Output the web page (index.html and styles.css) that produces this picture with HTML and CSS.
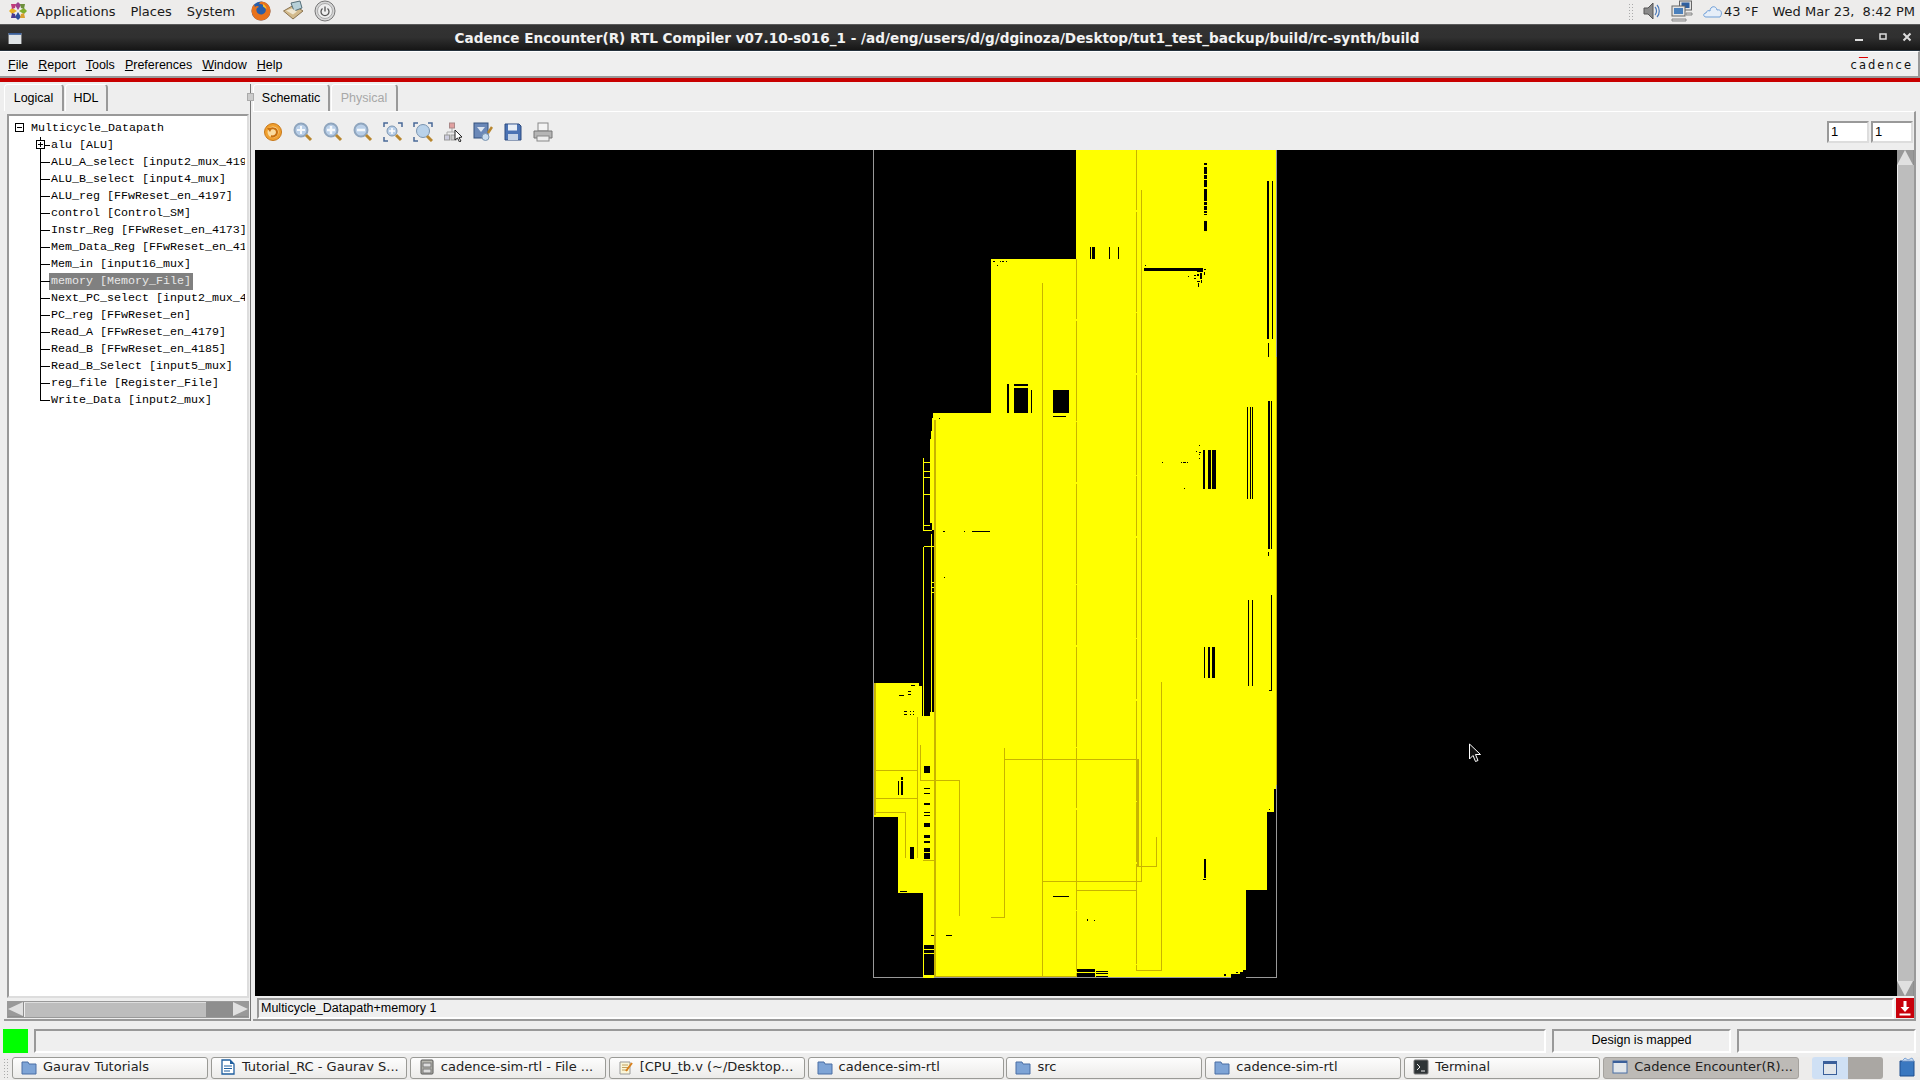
FILE: index.html
```html
<!DOCTYPE html>
<html lang="en">
<head>
<meta charset="utf-8">
<title>Cadence Encounter RTL Compiler</title>
<link rel="stylesheet" href="styles.css">
</head>
<body>
<header class="panel">
  <svg class="ico16 logo" viewBox="0 0 20 20"><path fill="#9c3f8f" d="M10 1l3 3-3 5-3-5z"/><path fill="#e8b020" d="M1 10l3-3 5 3-5 3z"/><path fill="#7fae2c" d="M19 10l-3-3-5 3 5 3z"/><path fill="#2d4f9c" d="M10 19l3-3-3-5-3 5z"/><path fill="#c03a7a" d="M3 3h5l-1 4-3 1z"/><path fill="#6d8f3c" d="M17 3h-5l1 4 3 1z"/><path fill="#4a3a90" d="M3 17h5l-1-4-3-1z"/><path fill="#d9a030" d="M17 17h-5l1-4 3-1z"/></svg>
  <span class="panel-item">Applications</span><span class="panel-item">Places</span><span class="panel-item">System</span>
  <svg class="launcher" viewBox="0 0 22 22"><circle cx="11" cy="11" r="9.500" fill="#2a5ea8"/><path fill="#e8721c" d="M11 1.500c5 0 9.500 4 9.500 9.500S16 20.500 11 20.500 2 16.500 1.500 11c0-3 1-5 2.500-6.500L5 7c1.500-1.500 3-1 4 0-2 .5-3 2-2.500 4 .5 2.500 3 4 5.500 3.500 3-.5 4.500-3.500 3.500-6C14.500 5 12 3.500 9 4c1-1.500 1-2 2-2.500z"/><path fill="#f7c32c" d="M13 4c2 1 3.500 3 3.500 5L13 6.500z"/></svg>
  <svg class="launcher" viewBox="0 0 22 22"><path fill="#d2b98a" stroke="#8a7350" d="M1.500 11L12 5l9 6-10 8z"/><path fill="#b7d0d8" stroke="#56707a" d="M9 3l9-2 2 7-8 3z"/><path fill="#efe6d0" d="M4 10.500l6-2 5 3-4 3z"/></svg>
  <svg class="launcher" viewBox="0 0 22 22"><circle cx="11" cy="11" r="10" fill="#d6d6d6" stroke="#777"/><circle cx="11" cy="11" r="7.500" fill="#eee" stroke="#aaa"/><path fill="none" stroke="#555" stroke-width="1.300" d="M8.500 8.500a4 4 0 1 0 5 0M11 6.500v5"/></svg>
  <div class="panel-right">
    <span class="handle"></span>
    <svg class="tray-speaker" viewBox="0 0 20 20"><path fill="#8a8a8a" stroke="#555" d="M2 7h4l5-5v16l-5-5H2z"/><path fill="none" stroke="#4a78b8" stroke-width="1.200" d="M13 6c2 2 2 6 0 8M15 4c3 3 3 9 0 12"/></svg>
    <svg class="tray-net" viewBox="0 0 22 22"><rect x="8.500" y="1" width="12" height="9" fill="#e4e4e4" stroke="#666"/><rect x="10.500" y="2.500" width="8" height="5.500" fill="#2f5f9f"/><rect x="1" y="6" width="13" height="10" fill="#e4e4e4" stroke="#666"/><rect x="3" y="8" width="9" height="6" fill="#4a80bc"/><path fill="#ddd" stroke="#888" d="M1 19h14v2H1zM15 13h6v2h-6z"/></svg>
    <svg class="tray-cloud" viewBox="0 0 20 14"><path fill="#e6eef8" stroke="#6f9fd8" d="M3 13C0 13 0 9 3 9c0-2 3-3 4-2 0-5 6-6 7-1 4-1 6 3 3 7z"/></svg>
    <span class="weather">43 °F</span>
    <span class="clock">Wed Mar 23,&nbsp; 8:42 PM</span>
  </div>
</header>

<div class="titlebar">
  <svg class="win-ico" viewBox="0 0 14 12"><rect width="14" height="12" fill="#dfe3e6"/><rect width="14" height="2" fill="#3a5f9a"/></svg>
  <span class="title-text">Cadence Encounter(R) RTL Compiler v07.10-s016_1 - /ad/eng/users/d/g/dginoza/Desktop/tut1_test_backup/build/rc-synth/build</span>
  <div class="win-btns">
    <svg viewBox="0 0 10 10"><path d="M1 8h8" stroke="#ddd" stroke-width="2"/></svg>
    <svg viewBox="0 0 10 10"><rect x="2" y="2" width="6" height="5" fill="none" stroke="#ddd" stroke-width="1.500"/></svg>
    <svg viewBox="0 0 10 10"><path d="M1.500 1.500l7 7M8.500 1.500l-7 7" stroke="#ddd" stroke-width="2"/></svg>
  </div>
</div>

<nav class="menubar">
  <span><u>F</u>ile</span><span><u>R</u>eport</span><span><u>T</u>ools</span><span><u>P</u>references</span><span><u>W</u>indow</span><span><u>H</u>elp</span>
  <span class="brand">c<span class="brand-a">a</span>dence</span>
</nav>
<div class="redline"></div>

<main class="main">
  <section class="left">
    <div class="tabs">
      <span class="tab tab-logical">Logical</span><span class="tab tab-hdl">HDL</span>
    </div>
    <div class="treebox">
      <div class="tree">
        <div class="root"><span class="box"><i class="minus"></i></span>Multicycle_Datapath</div>
        <ul class="branch">
          <li><span class="box box-alu"><i class="minus"></i><i class="plus"></i></span><span class="lbl">alu [ALU]</span></li>
          <li><span class="lbl">ALU_A_select [input2_mux_419</span></li>
          <li><span class="lbl">ALU_B_select [input4_mux]</span></li>
          <li><span class="lbl">ALU_reg [FFwReset_en_4197]</span></li>
          <li><span class="lbl">control [Control_SM]</span></li>
          <li><span class="lbl">Instr_Reg [FFwReset_en_4173]</span></li>
          <li><span class="lbl">Mem_Data_Reg [FFwReset_en_41</span></li>
          <li><span class="lbl">Mem_in [input16_mux]</span></li>
          <li><span class="lbl sel">memory [Memory_File]</span></li>
          <li><span class="lbl">Next_PC_select [input2_mux_4</span></li>
          <li><span class="lbl">PC_reg [FFwReset_en]</span></li>
          <li><span class="lbl">Read_A [FFwReset_en_4179]</span></li>
          <li><span class="lbl">Read_B [FFwReset_en_4185]</span></li>
          <li><span class="lbl">Read_B_Select [input5_mux]</span></li>
          <li><span class="lbl">reg_file [Register_File]</span></li>
          <li><span class="lbl">Write_Data [input2_mux]</span></li>
        </ul>
      </div>
    </div>
    <div class="hscroll">
      <span class="arrow-l"></span><span class="thumb"></span><span class="trough"></span><span class="arrow-r"></span>
    </div>
  </section>

  <div class="splitter"><span class="grip"></span></div>

  <section class="right">
    <div class="tabs">
      <span class="tab tab-schem">Schematic</span><span class="tab tab-phys">Physical</span>
    </div>
    <div class="workpane">
      <div class="toolbar">
        <svg class="tool" viewBox="0 0 20 20"><circle cx="10" cy="10" r="8.500" fill="#f0a030" stroke="#c87818"/><circle cx="10" cy="10" r="5.500" fill="#fbdca0"/><path fill="none" stroke="#c87010" stroke-width="2" d="M6 8c2-3 8-2 8 2s-4 5-6 4"/><path fill="#c87010" d="M4 6l5 0-2 4z"/></svg>
        <svg class="tool" viewBox="0 0 20 20"><circle cx="8" cy="8" r="6.500" fill="#b9cfe8" stroke="#8fa5bd" stroke-width="2"/><path stroke="#b8862e" stroke-width="3" d="M13 13l5 5"/><path stroke="#f4f8fc" stroke-width="2" d="M4 8h8M8 4v8"/></svg>
        <svg class="tool" viewBox="0 0 20 20"><circle cx="8" cy="8" r="6.500" fill="#b9cfe8" stroke="#8fa5bd" stroke-width="2"/><path stroke="#b8862e" stroke-width="3" d="M13 13l5 5"/><path stroke="#f4f8fc" stroke-width="2.500" d="M4 8h8M8 4v8"/></svg>
        <svg class="tool" viewBox="0 0 20 20"><circle cx="8" cy="8" r="6.500" fill="#b9cfe8" stroke="#8fa5bd" stroke-width="2"/><path stroke="#b8862e" stroke-width="3" d="M13 13l5 5"/><path stroke="#f4f8fc" stroke-width="2.500" d="M4 8h8"/></svg>
        <svg class="tool" viewBox="0 0 20 20"><path fill="none" stroke="#4a6a98" stroke-width="1.500" d="M1 5V1h4M15 1h4v4M1 15v4h4"/><circle cx="9" cy="9" r="5" fill="#b9cfe8" stroke="#7a94b0"/><path stroke="#b8862e" stroke-width="3" d="M13 13l5 5"/><path stroke="#fff" stroke-width="1.500" d="M6 9h6M9 6v6"/></svg>
        <svg class="tool" viewBox="0 0 20 20"><path fill="none" stroke="#4a6a98" stroke-width="1.500" d="M1 5V1h4M15 1h4v4M1 15v4h4"/><circle cx="10" cy="9" r="6.500" fill="#b9d2ea" stroke="#7a94b0"/><path stroke="#b8862e" stroke-width="3" d="M14 14l5 5"/></svg>
        <svg class="tool" viewBox="0 0 20 20"><path stroke="#aaa" fill="none" d="M9 6v4M4 13v-3h10v3"/><rect x="6.500" y="1" width="5" height="5" fill="#e0a0a0" stroke="#a88"/><rect x="1.500" y="13" width="5" height="5" fill="#ccd" stroke="#999"/><rect x="8" y="13" width="5" height="5" fill="#ccc" stroke="#999"/><path fill="#fff" stroke="#222" d="M12 8l0 10 2.500-2 2 4 1.500-1-2-3.500 3-.5z"/></svg>
        <svg class="tool" viewBox="0 0 20 20"><rect x="1" y="1" width="14" height="15" fill="#6a88b8" stroke="#33507e"/><path fill="#dde6f2" d="M4 5h8l-4 5z"/><circle cx="12.500" cy="15" r="3.500" fill="#c8dcf0" stroke="#7a94b0"/><path stroke="#b8862e" stroke-width="2.500" d="M15 11l4-6"/></svg>
        <svg class="tool" viewBox="0 0 20 20"><path fill="#4a72b4" stroke="#2e4c80" d="M2 2h14l2 2v14H2z"/><rect x="5" y="2.500" width="9" height="6" fill="#e8eef6"/><rect x="5" y="12" width="10" height="6" fill="#c4d2e6"/></svg>
        <svg class="tool" viewBox="0 0 20 20"><rect x="5" y="1" width="10" height="8" fill="#f4f4f4" stroke="#888"/><path fill="#b5b5b5" stroke="#777" d="M1 9h18v7H1z"/><rect x="4" y="14" width="12" height="5" fill="#eee" stroke="#888"/></svg>
        <div class="pager"><span class="pageno">1</span><span class="pageno">1</span></div>
      </div>
      <div class="canvas-row">
        <svg class="canvas" viewBox="255 150 1642 846" shape-rendering="crispEdges">
          <rect x="255" y="150" width="1642" height="846" fill="#000"/>
          <path fill="#ff0" d="M1076 150H1276V357H1277V789H1274V812H1267V890H1246V970H1243V972H1240V975H1231V978H923V893H898V817H874V683H919V686H922V716H930V712H934V530H932V523H930V439H931V431H932V418H933V413H991V259H1076Z"/>
          <path fill="none" stroke="#ff0" d="M923.500 457.500V530.500H932M923.500 462.500H930M923.500 471.500H930M923.500 477.500H930M923.500 494.500H930M923.500 525.500H930M923.500 546.500H934M923.500 546.500V716M931.500 534V716M931.500 582.500H934M931.500 587.500H934M931.500 592.500H934"/>
          <path fill="none" stroke="#c8b400" d="M1042.500 283V978M1141.500 190V881.500H1042M1161.500 682V970.500H1136M1004.500 748V917.500H991M1004.500 759.500H1137M1156.500 837V866.500H1137M1076.500 890.500H1136M920.500 745V780.500H959.500V916M876 770.500H917M876 798.500H917M875 812.500H905.500V858M917.500 717V858M923 860.500H934M1276.500 357V785"/>
          <path fill="none" stroke="#c8b400" stroke-dasharray="60 2 100 1" d="M1076.500 259V978M1136.500 150V970"/>
          <path fill="none" stroke="#c8b400" stroke-width="2" d="M935 420V977H1076M1138 759V866M875 683V815"/>
          <path fill="none" stroke="#999" d="M873.500 150V977.500H1276.500M1276.500 150V357M1276.500 785V977"/>
          <path fill="#000" d="M1204 163h3v2h-3zM1204 167h3v7h-3zM1204 175h3v4h-3zM1204 180h3v7h-3zM1204 189h3v12h-3zM1204 202h3v3h-3zM1204 206h3v4h-3zM1204 211h3v2h-3zM1204 214h3v1h-3zM1204 221h3v10h-3zM1090 247h1v12h-1zM1092 247h3v12h-3zM1109 247h1v12h-1zM1118 247h1v12h-1zM1144 268h59v3h-59zM1197 271h6v1h-6zM1267 181h2v158h-2zM1272 181h1v158h-1zM1268 343h1v14h-1zM1007 384h2v29h-2zM1014 384h14v2h-14zM1014 388h14v25h-14zM1031 390h1v23h-1zM1053 390h16v23h-16zM1053 416h13v1h-13zM1247 407h1v92h-1zM1250 407h1v92h-1zM1252 407h1v92h-1zM1268 401h2v148h-2zM1271 401h1v148h-1zM1268 552h1v4h-1zM1203 450h2v39h-2zM1208 450h3v39h-3zM1212 450h4v39h-4zM1204 647h1v31h-1zM1208 647h2v31h-2zM1212 647h3v31h-3zM1248 600h1v86h-1zM1252 600h1v86h-1zM1271 595h1v96h-1zM1269 690h2v1h-2zM972 531h18v1h-18zM943 531h2v1h-2zM964 531h1v1h-1zM924 766h6v7h-6zM924 788h6v1h-6zM924 793h6v1h-6zM924 803h6v2h-6zM924 812h6v1h-6zM924 815h6v1h-6zM924 823h6v4h-6zM924 835h6v3h-6zM924 841h6v2h-6zM924 848h6v4h-6zM924 853h6v6h-6zM924 945h10v4h-10zM924 950h10v3h-10zM924 954h10v21h-10zM910 847h4v12h-4zM898 781h1v14h-1zM901 781h2v14h-2zM901 777h2v3h-2zM1077 969h18v3h-18zM1077 973h18v4h-18zM1096 971h12v1h-12zM1096 973h12v1h-12zM1096 976h12v1h-12zM1053 896h16v1h-16zM900 891h7v1h-7zM931 935h3v1h-3zM946 935h6v1h-6zM1087 919h1v2h-1zM1094 920h1v1h-1zM1204 859h2v19h-2zM1203 879h3v1h-3zM1231 974h15v4h-15zM1224 974h2v2h-2zM1236 972h2v1h-2zM1269 809h1v1h-1zM993 261h2v1h-2zM1000 261h1v1h-1zM1002 261h2v1h-2zM1006 261h1v1h-1zM997 265h1v1h-1zM1197 274h2v2h-2zM1200 273h2v6h-2zM1194 275h2v1h-2zM1194 278h2v1h-2zM1197 281h3v1h-3zM1201 280h1v3h-1zM1198 283h1v4h-1zM1204 269h2v1h-2zM1204 272h1v3h-1zM1188 276h1v1h-1zM1145 265h1v1h-1zM1199 445h1v1h-1zM1196 451h1v1h-1zM1199 452h2v1h-2zM1199 454h1v1h-1zM1199 458h1v1h-1zM1162 462h1v1h-1zM1181 462h1v1h-1zM1183 462h3v1h-3zM1187 462h1v1h-1zM1184 488h1v1h-1zM944 577h1v1h-1zM939 418h1v1h-1zM899 695h5v1h-5zM908 691h3v1h-3zM908 694h3v1h-3zM904 711h3v1h-3zM904 714h3v1h-3zM910 711h1v1h-1zM913 711h1v1h-1zM910 714h1v1h-1zM913 714h1v1h-1z"/>
          <path fill="#ff0" d="M923 977h11v1h-11z"/>
          <path fill="#000" stroke="none" d="M919 683h4v3h-4zM911 685h4v1h-4z"/>
        </svg>
        <div class="vscroll">
          <span class="tri-up"></span>
          <span class="vtrack"></span>
          <span class="tri-down"></span>
        </div>
      </div>
      <div class="pathbar">
        <div class="pathfield">Multicycle_Datapath+memory 1</div>
        <svg class="redbtn" viewBox="0 0 18 20"><rect width="18" height="20" fill="#c8000a"/><path fill="#fff" d="M7.500 3h3v6h3l-4.500 5-4.500-5h3zM3.500 15.500h11v2h-11z"/></svg>
      </div>
    </div>
  </section>
</main>

<div class="statusbar">
  <span class="led"></span>
  <span class="sfield sfield-main"></span>
  <span class="sfield sfield-msg">Design is mapped</span>
  <span class="sfield sfield-end"></span>
</div>

<footer class="taskbar">
  <span class="dots"></span>
  <div class="task"><svg class="tico" viewBox="0 0 16 16"><path fill="#7ea4d6" stroke="#4a6fa5" d="M1 3h6l1 2h7v10H1z"/></svg>Gaurav Tutorials</div>
  <div class="task"><svg class="tico" viewBox="0 0 16 16"><path fill="#fff" stroke="#1f5f9f" stroke-width="1.300" d="M2 1h8l4 4v10H2z"/><path stroke="#1f5f9f" d="M4 7h8M4 9.500h8M4 12h6"/><path fill="#1f5f9f" d="M10 1l4 4h-4z"/></svg>Tutorial_RC - Gaurav S...</div>
  <div class="task"><svg class="tico" viewBox="0 0 16 16"><rect x="2" y="1" width="12" height="14" rx="1" fill="#b8b8b0" stroke="#555"/><rect x="4" y="4" width="8" height="4" fill="#ddd" stroke="#777"/><rect x="4" y="10" width="8" height="4" fill="#ddd" stroke="#777"/></svg>cadence-sim-rtl - File ...</div>
  <div class="task"><svg class="tico" viewBox="0 0 16 16"><path fill="#fbf6d8" stroke="#999" d="M2 3h10v12H2z"/><path stroke="#c0a060" d="M4 6h6M4 8.500h6M4 11h6"/><path stroke="#d8801c" stroke-width="2" d="M8 12l6-8"/></svg>[CPU_tb.v (~/Desktop...</div>
  <div class="task"><svg class="tico" viewBox="0 0 16 16"><path fill="#7ea4d6" stroke="#4a6fa5" d="M1 3h6l1 2h7v10H1z"/></svg>cadence-sim-rtl</div>
  <div class="task"><svg class="tico" viewBox="0 0 16 16"><path fill="#7ea4d6" stroke="#4a6fa5" d="M1 3h6l1 2h7v10H1z"/></svg>src</div>
  <div class="task"><svg class="tico" viewBox="0 0 16 16"><path fill="#7ea4d6" stroke="#4a6fa5" d="M1 3h6l1 2h7v10H1z"/></svg>cadence-sim-rtl</div>
  <div class="task"><svg class="tico" viewBox="0 0 16 16"><rect x="1" y="1" width="14" height="14" rx="1" fill="#2e3436" stroke="#777"/><path stroke="#eee" fill="none" d="M4 5l3 3-3 3M8 12h4"/></svg>Terminal</div>
  <div class="task task-active"><svg class="tico" viewBox="0 0 16 16"><rect x="1" y="2" width="14" height="12" fill="#e2e6ea" stroke="#4a6fa5"/><rect x="1" y="2" width="14" height="2" fill="#3a5f9a"/></svg>Cadence Encounter(R)...</div>
  <div class="workspaces">
    <span class="ws ws-on"><svg class="ws-win" viewBox="0 0 14 14"><rect x=".5" y=".5" width="13" height="13" fill="#e2e6ea" stroke="#3a5f9a"/><rect x="1" y="1" width="12" height="2" fill="#3a5f9a"/></svg></span>
    <span class="ws ws-off"></span>
  </div>
  <svg class="trash" viewBox="0 0 18 20"><path fill="#3a78c0" stroke="#1f4f8f" d="M2 4h14v15H2z"/><path fill="#cfe0f2" stroke="#7ea4d6" d="M4 4l3-3 3 2 4-2 2 3z"/></svg>
</footer>

<svg class="cursor" viewBox="0 0 14 20"><path fill="#111" stroke="#fff" d="M1.500 1v15l3.500-3.500 2.500 6 2.500-1-2.500-6h5z"/></svg>
</body>
</html>
```

FILE: styles.css
```css
* { box-sizing: border-box; }
html, body { margin: 0; padding: 0; }
body {
  width: 1920px;
  height: 1080px;
  overflow: hidden;
  display: flex;
  flex-direction: column;
  background: #eeeeee;
  font-family: "Liberation Sans", Arial, sans-serif;
  color: #000;
  position: relative;
}

/* GNOME top panel */
.panel {
  height: 25px;
  flex: none;
  display: flex;
  align-items: center;
  background: #edeceb;
  font-family: "DejaVu Sans", sans-serif;
  font-size: 13px;
  color: #1a1a1a;
  border-bottom: 1px solid #5a5a5a;
  padding: 0 0 2px 8px;
}
.ico16 { width: 20px; height: 20px; }
.logo { margin-right: 8px; }
.panel-item { margin-right: 15px; }
.launcher { width: 22px; height: 22px; margin-right: 10px; }
.launcher:first-of-type { margin-left: 4px; }
.panel-right { margin-left: auto; display: flex; align-items: center; height: 100%; }
.handle { width: 5px; height: 17px; margin-right: 9px; background: radial-gradient(circle, #aaa 0.7px, transparent 1px) 0 0 / 3px 3px; }
.tray-speaker { width: 20px; height: 20px; margin-right: 9px; }
.tray-net { width: 22px; height: 22px; margin-right: 9.500px; }
.tray-cloud { width: 20px; height: 14px; margin-right: 1px; }
.weather { margin-right: 14px; }
.clock { margin-right: 5px; }

/* window title */
.titlebar {
  height: 26px;
  flex: none;
  display: flex;
  align-items: center;
  justify-content: center;
  position: relative;
  background: linear-gradient(#333 0, #303030 50%, #161616 100%);
  border-bottom: 1px solid #25323d;
  padding-right: 46px;
}
.win-ico { position: absolute; left: 8px; top: 8px; width: 14px; height: 11px; }
.title-text { font-family: "DejaVu Sans", sans-serif; font-weight: bold; font-size: 13.600px; color: #f2f2f2; white-space: nowrap; }
.win-btns { position: absolute; right: 8px; top: 7px; display: flex; gap: 14px; }
.win-btns svg { width: 10px; height: 10px; }

/* menubar */
.menubar {
  height: 27px;
  flex: none;
  display: flex;
  align-items: center;
  gap: 10px;
  padding: 2px 5px 0 8px;
  font-size: 12.500px;
  background: #efefef;
  border-top: 1px solid #fff;
  border-bottom: 2px solid #999;
  border-right: 2px solid #999;
}
.brand {
  margin-left: auto;
  font-family: "DejaVu Sans", sans-serif;
  font-size: 11.500px;
  letter-spacing: 2px;
  color: #111;
  padding: 0;
  height: 20px;
  line-height: 20px;
}
.brand-a { text-decoration: overline; text-decoration-color: #d00; }
.redline { height: 4px; flex: none; background: #c80000; }

/* main */
.main { flex: none; height: 941px; display: flex; padding: 2px 4px 2px 4px; }
.left { width: 246px; display: flex; flex-direction: column; border-bottom: 2px solid #999; }
.tabs { height: 27px; flex: none; display: flex; align-items: stretch; font-size: 12.500px; }
.tab {
  display: flex;
  align-items: center;
  justify-content: center;
  border-top: 1px solid #fff;
  border-left: 1px solid #fff;
  border-right: 2px solid #999;
  border-radius: 4px 4px 0 0;
  margin-right: 1px;
}
.tab-logical { width: 60px; }
.tab-hdl { width: 43px; }
.tab-schem { width: 77px; }
.tab-phys { width: 67px; color: #a8a8a8; }

.treebox {
  height: 884px;
  margin: 3px 1px 0 3px;
  background: #fff;
  border: 2px solid #999;
  border-right-color: #ddd;
  border-bottom-color: #ddd;
  overflow: hidden;
}
.tree {
  font-family: "Liberation Mono", monospace;
  font-size: 11.670px;
  line-height: 17px;
  padding-top: 4px;
  width: 236px;
  overflow: hidden;
  white-space: nowrap;
  color: #000;
}
.root { padding-left: 22px; height: 17px; position: relative; }
.box {
  position: absolute;
  left: 6px;
  top: 3px;
  width: 9px;
  height: 9px;
  background: #fff;
  border: 1px solid #000;
  z-index: 1;
}
.minus { position: absolute; left: 1px; top: 3px; width: 5px; height: 1px; background: #000; }
.plus { position: absolute; left: 3px; top: 1px; width: 1px; height: 5px; background: #000; }
.box-alu { left: 27px; top: 3px; }
.branch { list-style: none; margin: 0; padding: 0; position: relative; }
.branch li { height: 17px; padding-left: 42px; position: relative; }
.branch li::before {
  content: "";
  position: absolute;
  left: 31px;
  top: 0;
  bottom: 0;
  border-left: 1px solid #000;
}
.branch li::after {
  content: "";
  position: absolute;
  left: 31px;
  top: 8px;
  width: 10px;
  border-top: 1px solid #000;
}
.branch li:last-child::before { bottom: 8px; }
.lbl { display: inline-block; height: 17px; }
.sel { background: #808080; color: #e8e8e8; margin-left: -2px; padding: 0 2px; width: 144px; }

.hscroll {
  height: 17px;
  margin: 3px 1px 0 3px;
  display: flex;
  background: #8e8e8e;
  border: 1px solid #999;
}
.arrow-l { width: 0; height: 0; border-style: solid; border-width: 7px 15px 7px 0; border-color: #999 #e0e0e0 #999 #8e8e8e; }
.thumb { width: 182px; background: #bdbdbd; border-top: 1px solid #ddd; border-left: 1px solid #eee; margin-left: 1px; }
.trough { flex: 1; }
.arrow-r { width: 0; height: 0; border-style: solid; border-width: 7px 0 7px 15px; border-color: #999 #8e8e8e #999 #e0e0e0; }

.splitter { width: 3px; flex: none; position: relative; background: #efefef; border-left: 1px solid #777; }
.grip { position: absolute; left: -4px; top: 9px; width: 7px; height: 8px; background: #ccc; border: 1px solid #aaa; }

.right { flex: 1; display: flex; flex-direction: column; min-width: 0; }
.workpane { flex: 1; display: flex; flex-direction: column; border-top: 1px solid #fff; border-right: 2px solid #999; border-bottom: 2px solid #999; padding-left: 2px; }
.toolbar { height: 38px; flex: none; display: flex; align-items: center; padding: 2px 1px 0 7.500px; gap: 10px; }
.tool { width: 20px; height: 20px; }
.pager { margin-left: auto; display: flex; gap: 2px; }
.pageno {
  width: 42px;
  height: 22px;
  background: #fff;
  border: 2px solid #999;
  border-right-color: #ddd;
  border-bottom-color: #ddd;
  font-size: 13px;
  line-height: 18px;
  padding-left: 2px;
}

.canvas-row { height: 846px; flex: none; display: flex; }
.canvas { width: 1642px; height: 846px; display: block; flex: none; }
.vscroll { width: 17px; flex: none; display: flex; flex-direction: column; background: #8e8e8e; margin-left: 0; }
.tri-up { width: 0; height: 0; border-style: solid; border-width: 0 8px 15px 8px; border-color: #999 #999 #e0e0e0 #999; }
.vtrack { flex: 1; background: #bdbdbd; border-left: 1px solid #eee; }
.tri-down { width: 0; height: 0; border-style: solid; border-width: 15px 8px 0 8px; border-color: #e0e0e0 #999 #999 #999; }

.pathbar { flex: 1; display: flex; align-items: flex-start; padding: 2px 0 0 2px; gap: 2px; }
.pathfield {
  flex: 1;
  height: 21px;
  font-size: 12.500px;
  line-height: 17px;
  padding-left: 2px;
  background: #efefef;
  border: 2px solid #999;
  border-right-color: #fff;
  border-bottom-color: #fff;
}
.redbtn { width: 18px; height: 20px; flex: none; }

/* status */
.statusbar { height: 34px; flex: none; display: flex; align-items: flex-start; padding: 6px 4px 0 3px; gap: 6px; }
.led { width: 25px; height: 24px; background: #00ff00; flex: none; }
.sfield { height: 24px; background: #efefef; border: 2px solid #999; border-right-color: #fff; border-bottom-color: #fff; font-size: 12.500px; text-align: center; line-height: 18px; flex: none; }
.sfield-main { flex: 1; }
.sfield-msg { width: 179px; }
.sfield-end { width: 179px; }

/* taskbar */
.taskbar {
  flex: 1;
  display: flex;
  align-items: flex-start;
  background: #edeceb;
  font-family: "DejaVu Sans", sans-serif;
  font-size: 13px;
  color: #222;
  min-height: 0;
}
.dots { width: 6px; height: 20px; margin: 1px 3px 0 3px; flex: none; background: radial-gradient(circle, #aaa 0.7px, transparent 1px) 0 0 / 3px 3px; }
.task {
  width: 196px;
  height: 22px;
  flex: none;
  margin-right: 2.900px;
  display: flex;
  align-items: center;
  padding: 0 0 3px 8px;
  gap: 6px;
  border: 1px solid #9a9a96;
  border-radius: 3px;
  background: linear-gradient(#fdfdfd, #ecebe9);
  white-space: nowrap;
  overflow: hidden;
}
.task-active { background: #bdbab6; border-color: #a5a29e; }
.tico { width: 16px; height: 16px; flex: none; }
.workspaces { display: flex; width: 71px; height: 22px; margin-left: 10px; flex: none; border-radius: 3px; overflow: hidden; }
.ws { flex: 1; display: flex; align-items: center; justify-content: center; }
.ws-on { background: #cfe0f4; }
.ws-off { background: #aaa7a3; }
.ws-win { width: 14px; height: 14px; }
.trash { width: 18px; height: 20px; margin-left: 15px; flex: none; }

.cursor { position: absolute; left: 1468px; top: 743px; width: 14px; height: 20px; }
```
